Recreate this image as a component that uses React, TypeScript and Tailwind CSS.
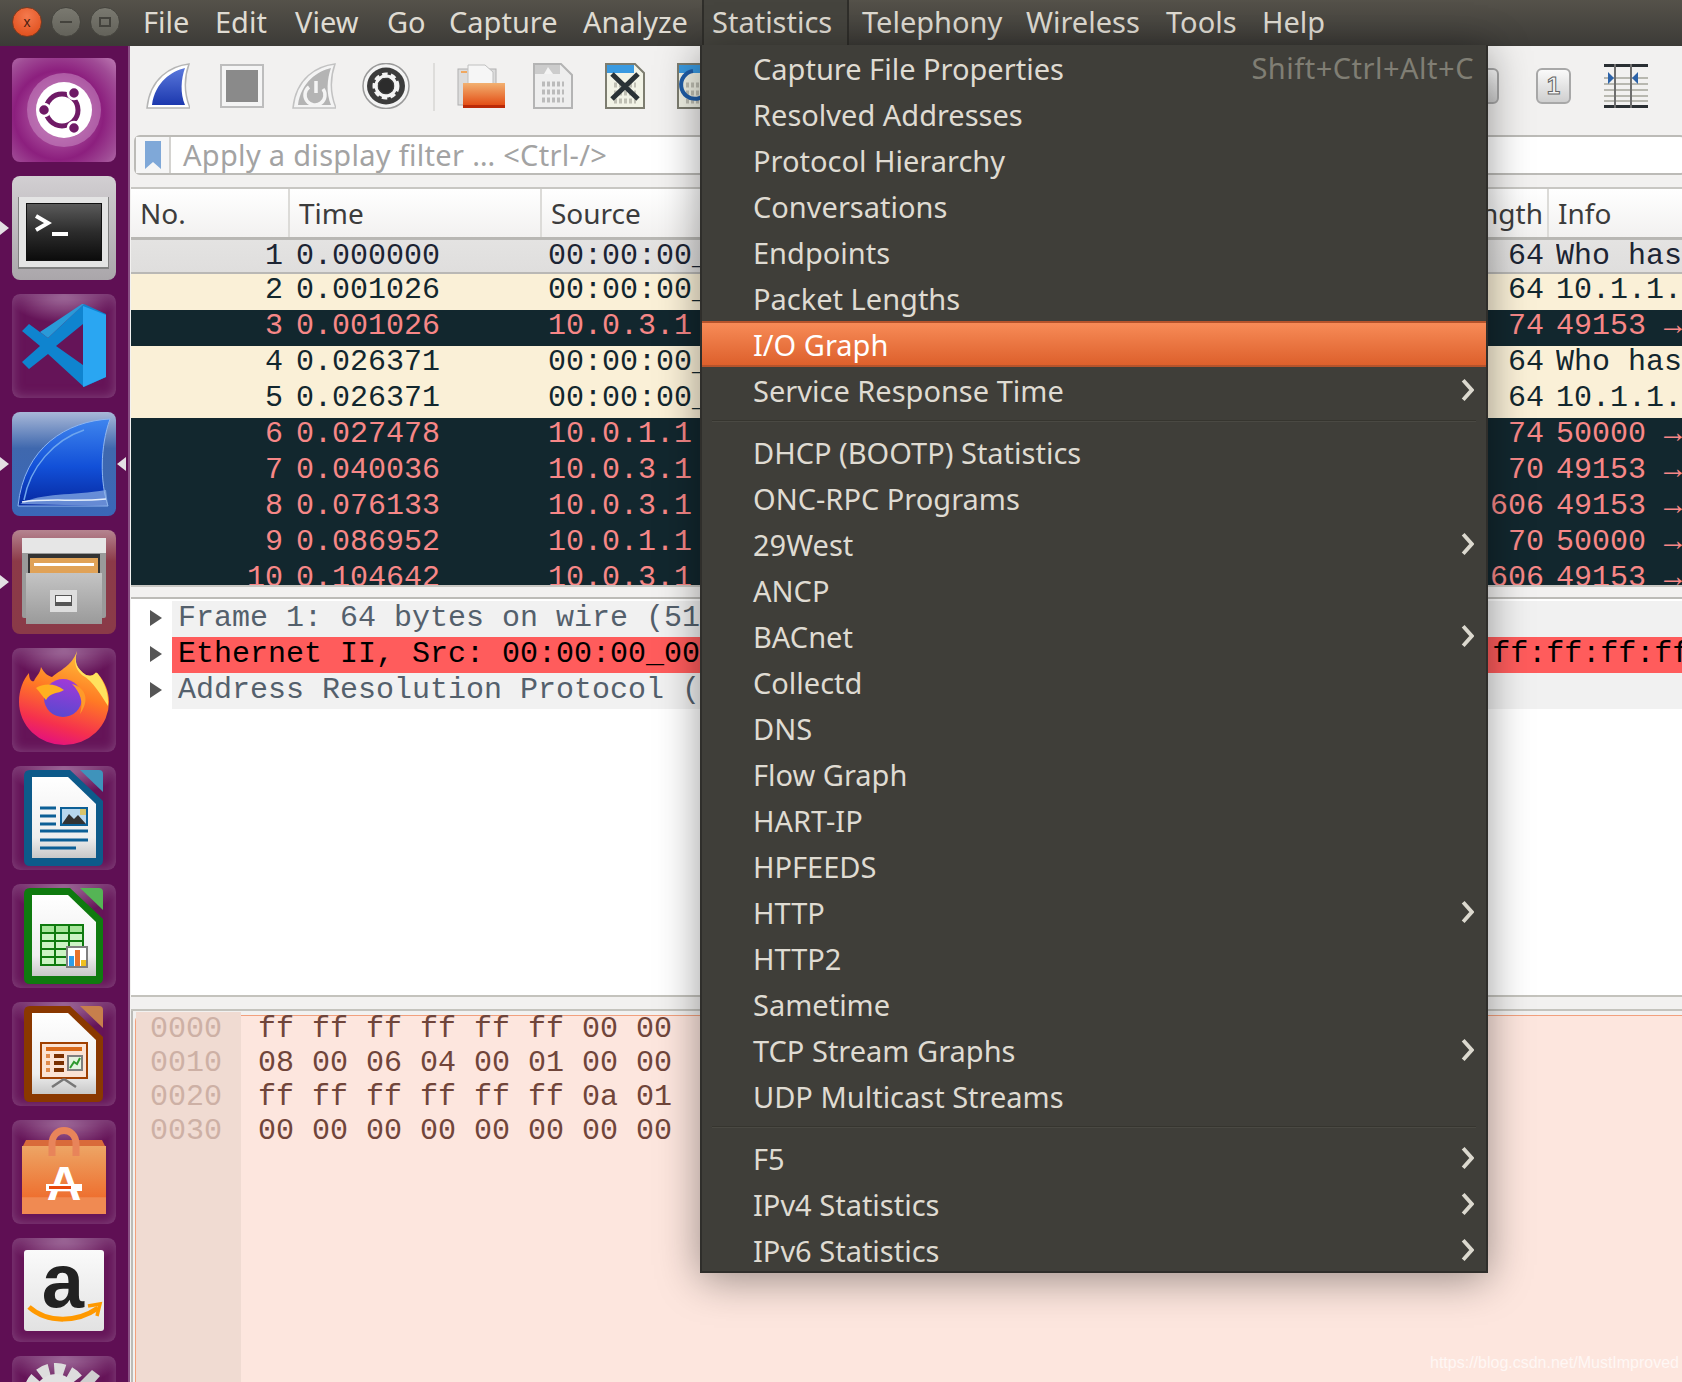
import type { ReactNode } from 'react';

const menuBar = [
  { label: 'File', w: 'w-[72px]' },
  { label: 'Edit', w: 'w-[80px]' },
  { label: 'View', w: 'w-[92px]' },
  { label: 'Go', w: 'w-[62px]' },
  { label: 'Capture', w: 'w-[134px]' },
  { label: 'Analyze', w: 'w-[119px]' },
];
const menuBarRest = [
  { label: 'Telephony', w: 'w-[164px]' },
  { label: 'Wireless', w: 'w-[140px]' },
  { label: 'Tools', w: 'w-[96px]' },
  { label: 'Help', w: 'w-[80px]' },
];

type Pkt = { no: number; time: string; src: string; len: number; info: string; kind: 'sel' | 'arp' | 'tcp' };

const packets: Pkt[] = [
  { no: 1, time: '0.000000', src: '00:00:00_00:00:00', len: 64, info: 'Who has', kind: 'sel' },
  { no: 2, time: '0.001026', src: '00:00:00_00:00:00', len: 64, info: '10.1.1.1', kind: 'arp' },
  { no: 3, time: '0.001026', src: '10.0.3.1', len: 74, info: '49153 →', kind: 'tcp' },
  { no: 4, time: '0.026371', src: '00:00:00_00:00:00', len: 64, info: 'Who has', kind: 'arp' },
  { no: 5, time: '0.026371', src: '00:00:00_00:00:00', len: 64, info: '10.1.1.1', kind: 'arp' },
  { no: 6, time: '0.027478', src: '10.0.1.1', len: 74, info: '50000 →', kind: 'tcp' },
  { no: 7, time: '0.040036', src: '10.0.3.1', len: 70, info: '49153 →', kind: 'tcp' },
  { no: 8, time: '0.076133', src: '10.0.3.1', len: 606, info: '49153 →', kind: 'tcp' },
  { no: 9, time: '0.086952', src: '10.0.1.1', len: 70, info: '50000 →', kind: 'tcp' },
  { no: 10, time: '0.104642', src: '10.0.3.1', len: 606, info: '49153 →', kind: 'tcp' },
];

const rowClass = {
  sel: 'bg-[linear-gradient(#e4e3e2,#dfdedd)] text-[#1c2433] border-y-2 border-[#b9b8b5] -mt-px',
  arp: 'bg-[#faf0d7] text-[#12272e] pb-1',
  tcp: 'bg-[#12272e] text-[#f78787] pb-1',
};

const hexRows = [
  ['0000', 'ff ff ff ff ff ff 00 00'],
  ['0010', '08 00 06 04 00 01 00 00'],
  ['0020', 'ff ff ff ff ff ff 0a 01'],
  ['0030', '00 00 00 00 00 00 00 00'],
];

type MenuEntry = { label: string; arrow?: boolean; active?: boolean; shortcut?: string };

const menuGroups: MenuEntry[][] = [
  [
    { label: 'Capture File Properties', shortcut: 'Shift+Ctrl+Alt+C' },
    { label: 'Resolved Addresses' },
    { label: 'Protocol Hierarchy' },
    { label: 'Conversations' },
    { label: 'Endpoints' },
    { label: 'Packet Lengths' },
    { label: 'I/O Graph', active: true },
    { label: 'Service Response Time', arrow: true },
  ],
  [
    { label: 'DHCP (BOOTP) Statistics' },
    { label: 'ONC-RPC Programs' },
    { label: '29West', arrow: true },
    { label: 'ANCP' },
    { label: 'BACnet', arrow: true },
    { label: 'Collectd' },
    { label: 'DNS' },
    { label: 'Flow Graph' },
    { label: 'HART-IP' },
    { label: 'HPFEEDS' },
    { label: 'HTTP', arrow: true },
    { label: 'HTTP2' },
    { label: 'Sametime' },
    { label: 'TCP Stream Graphs', arrow: true },
    { label: 'UDP Multicast Streams' },
  ],
  [
    { label: 'F5', arrow: true },
    { label: 'IPv4 Statistics', arrow: true },
    { label: 'IPv6 Statistics', arrow: true },
  ],
];

const plainTile =
  'bg-[#651458] bg-[radial-gradient(ellipse_55%_28%_at_50%_0%,#a878a4_0%,transparent_100%)] shadow-[inset_0_0_12px_#84487e]';

function DocIcon({ id, edge, corner, children }: { id: string; edge: string; corner: string; children: ReactNode }) {
  return (
    <svg viewBox="0 0 104 104" className="h-full w-full">
      <defs>
        <linearGradient id={id} x1="0" y1="0" x2="0" y2="1">
          <stop offset="0" stopColor="#ffffff" />
          <stop offset="0.75" stopColor="#eeeeee" />
          <stop offset="1" stopColor="#c8c8c8" />
        </linearGradient>
      </defs>
      <path d="M12 10 Q12 4 18 4 H58 L91 35 V94 Q91 100 85 100 H18 Q12 100 12 94 Z" fill={edge} />
      <path d="M68 4 H87 Q91 4 91 8 V26 Z" fill={corner} />
      <path d="M20 11 H56 L84 38 V92 H20 Z" fill={`url(#${id})`} />
      {children}
    </svg>
  );
}

const dockIcons: { tile: string; pipL?: boolean; pipR?: boolean; icon: ReactNode }[] = [
  {
    tile: 'bg-[radial-gradient(circle_at_45%_55%,#c478b8_0%,#8c1f7e_55%,#a04c96_80%,#bd7ab3_100%)]',
    icon: (
      <svg viewBox="0 0 104 104" className="h-full w-full">
        <circle cx="52" cy="52" r="37" fill="#c98bc2" opacity="0.55" />
        <circle cx="52" cy="52" r="28" fill="#ffffff" />
        <circle cx="50" cy="52" r="16" fill="none" stroke="#6f1a66" strokeWidth="5" />
        <g fill="#6f1a66" stroke="#ffffff" strokeWidth="2.5">
          <circle cx="62" cy="35" r="6" />
          <circle cx="32" cy="52" r="6" />
          <circle cx="62" cy="70" r="6" />
        </g>
      </svg>
    ),
  },
  {
    tile: 'bg-[linear-gradient(#d2cfd2,#aaa6aa)]',
    pipL: true,
    icon: (
      <svg viewBox="0 0 104 104" className="h-full w-full">
        <defs>
          <linearGradient id="termBg" x1="0" y1="0" x2="0" y2="1">
            <stop offset="0" stopColor="#5a5a5a" />
            <stop offset="0.5" stopColor="#2c2c2c" />
            <stop offset="1" stopColor="#0c0c0c" />
          </linearGradient>
        </defs>
        <rect x="6" y="21" width="91" height="72" fill="#808080" />
        <rect x="7" y="21" width="89" height="70" fill="#e4e4e4" />
        <rect x="14" y="27" width="76" height="58" fill="#111111" />
        <rect x="15" y="28" width="74" height="56" fill="url(#termBg)" />
        <path d="M24 40 L36 47 L24 54" fill="none" stroke="#ffffff" strokeWidth="4" />
        <rect x="40" y="56" width="16" height="4" fill="#ffffff" />
      </svg>
    ),
  },
  {
    tile: plainTile,
    icon: (
      <svg viewBox="0 0 104 104" className="h-full w-full">
        <path
          fillRule="evenodd"
          d="M72 10 L36 44 L17 30 L10 37 L28 52 L10 68 L17 75 L36 60 L72 93 L94 83 V20 Z M71 30 L44 52 L71 71 Z"
          fill="#0f84cf"
        />
        <path d="M72 10 L36 44 L28 38 L70 10 Z" fill="#2a9ad8" />
        <path d="M71 12 L94 21 V83 L71 93 Z" fill="#2aa6f2" />
      </svg>
    ),
  },
  {
    tile: 'bg-[linear-gradient(#a8b8d8_0%,#3f68ae_35%,#3a67b8_100%)]',
    pipL: true,
    pipR: true,
    icon: (
      <svg viewBox="0 0 104 104" className="h-full w-full">
        <defs>
          <linearGradient id="dockFin" x1="0" y1="0" x2="0" y2="1">
            <stop offset="0" stopColor="#3f85ee" />
            <stop offset="0.55" stopColor="#1250d8" />
            <stop offset="1" stopColor="#0628a0" />
          </linearGradient>
        </defs>
        <path d="M98 7 C55 9 12 35 6 94 H96 C88 70 88 35 98 7 Z" fill="url(#dockFin)" stroke="#8fb6f0" strokeWidth="1" />
        <path d="M12 88 C18 55 42 28 72 18" fill="none" stroke="#6ea6ee" strokeWidth="1.5" />
        <path d="M8 92 C30 80 60 84 94 78 L96 94 Z" fill="#8fb4e8" opacity="0.7" />
        <path d="M10 90 C34 86 64 90 94 87" fill="none" stroke="#e4eefb" strokeWidth="1.5" />
      </svg>
    ),
  },
  {
    tile: 'bg-[linear-gradient(#b58490,#8c3a48_30%,#8a3a48)]',
    pipL: true,
    icon: (
      <svg viewBox="0 0 104 104" className="h-full w-full">
        <defs>
          <linearGradient id="drawer" x1="0" y1="0" x2="0" y2="1">
            <stop offset="0" stopColor="#c4c4c4" />
            <stop offset="1" stopColor="#9a9a9a" />
          </linearGradient>
        </defs>
        <rect x="10" y="8" width="84" height="80" rx="2" fill="#9a9a9a" />
        <rect x="10" y="8" width="84" height="15" fill="#e6e6e6" />
        <rect x="16" y="24" width="72" height="20" fill="#333333" />
        <rect x="18" y="28" width="68" height="16" fill="#e0a257" />
        <rect x="22" y="33" width="60" height="3" fill="#ffffff" />
        <rect x="14" y="43" width="76" height="51" fill="url(#drawer)" />
        <rect x="38" y="60" width="27" height="22" fill="#dddddd" />
        <rect x="43" y="65" width="17" height="11" fill="#555555" />
        <rect x="44" y="66" width="15" height="6" fill="#f4f4f4" />
      </svg>
    ),
  },
  {
    tile: plainTile,
    icon: (
      <svg viewBox="0 0 104 104" className="h-full w-full">
        <defs>
          <linearGradient id="foxBody" x1="0.7" y1="0" x2="0.4" y2="1">
            <stop offset="0" stopColor="#ffc43a" />
            <stop offset="0.45" stopColor="#ff7a24" />
            <stop offset="0.8" stopColor="#f5304e" />
            <stop offset="1" stopColor="#e3127e" />
          </linearGradient>
          <linearGradient id="foxGlobe" x1="0.6" y1="0" x2="0.4" y2="1">
            <stop offset="0" stopColor="#a03ad8" />
            <stop offset="1" stopColor="#5a48d0" />
          </linearGradient>
        </defs>
        <path
          d="M65 3 C62 14 64 20 74 27 C84 30 82 22 86 26 C93 34 97 44 97 54 A45 43 0 0 1 7 54 C7 42 11 32 17 25 C17 32 20 34 22 33 C24 28 28 26 29 19 C32 25 36 28 40 29 C48 22 60 18 65 3 Z"
          fill="url(#foxBody)"
        />
        <path d="M65 3 C62 14 64 20 74 27 C84 30 82 22 86 26 C93 36 97 46 96 58 C88 46 82 34 70 27 C62 20 62 12 65 3 Z" fill="#ffe25e" />
        <circle cx="51" cy="50" r="19" fill="url(#foxGlobe)" />
        <path d="M24 40 C30 36 42 34 52 42 C46 46 38 44 34 52 C30 48 28 44 24 40 Z" fill="#ffb020" />
        <path d="M60 36 C74 40 78 52 68 66 C72 54 68 44 60 36 Z" fill="#ff9a2a" />
      </svg>
    ),
  },
  {
    tile: plainTile,
    icon: (
      <DocIcon id="pageW" edge="#0d5a8a" corner="#3f93bb">
        <g stroke="#0c5f96" strokeWidth="3">
          <path d="M28 42 H44 M28 50 H44 M28 58 H44 M28 65 H76 M28 74 H76 M28 82 H64" />
        </g>
        <rect x="48" y="41" width="28" height="19" fill="#0c5f96" />
        <rect x="50" y="43" width="24" height="15" fill="#b7d7ee" />
        <path d="M50 58 L57 48 L62 53 L66 49 L74 58 Z" fill="#333333" />
        <rect x="68" y="43" width="6" height="6" fill="#d8c46a" />
      </DocIcon>
    ),
  },
  {
    tile: plainTile,
    icon: (
      <DocIcon id="pageC" edge="#0f7a0f" corner="#55b455">
        <rect x="28" y="40" width="44" height="42" fill="#0f7a0f" />
        <g fill="#a6e59a">
          <rect x="30" y="42" width="12" height="6" />
          <rect x="44" y="42" width="12" height="6" />
          <rect x="58" y="42" width="12" height="6" />
        </g>
        <g fill="#ccf3c4">
          <rect x="30" y="50" width="12" height="6" />
          <rect x="44" y="50" width="12" height="6" />
          <rect x="58" y="50" width="12" height="6" />
          <rect x="30" y="58" width="12" height="6" />
          <rect x="44" y="58" width="12" height="6" />
          <rect x="58" y="58" width="12" height="6" />
          <rect x="30" y="66" width="12" height="6" />
          <rect x="44" y="66" width="12" height="6" />
          <rect x="30" y="74" width="12" height="6" />
          <rect x="44" y="74" width="12" height="6" />
        </g>
        <rect x="54" y="62" width="22" height="22" fill="#7f7f7f" />
        <rect x="56" y="64" width="18" height="18" fill="#ffffff" />
        <rect x="57" y="72" width="5" height="10" fill="#2f9ee8" />
        <rect x="63" y="66" width="5" height="16" fill="#e8742c" />
        <rect x="69" y="76" width="5" height="6" fill="#f0c020" />
      </DocIcon>
    ),
  },
  {
    tile: plainTile,
    icon: (
      <DocIcon id="pageI" edge="#8a3800" corner="#c77f4c">
        <rect x="28" y="40" width="48" height="37" fill="#a04000" />
        <rect x="30" y="42" width="44" height="33" fill="#fbe3d3" />
        <rect x="34" y="45" width="36" height="4" fill="#d96a1a" />
        <path d="M34 54 H38 M34 61 H38 M34 68 H38" stroke="#e08a4a" strokeWidth="4" />
        <path d="M42 54 H52 M42 61 H52 M42 68 H52" stroke="#7a3000" strokeWidth="4" />
        <rect x="55" y="53" width="16" height="16" fill="#7f7f7f" />
        <rect x="57" y="55" width="12" height="12" fill="#e4f3e0" />
        <path d="M58 66 L62 60 L65 62 L68 56" fill="none" stroke="#2f9a2f" strokeWidth="2" />
        <path d="M52 77 L40 85 M52 77 L64 85" stroke="#777777" strokeWidth="2.5" />
      </DocIcon>
    ),
  },
  {
    tile: plainTile,
    icon: (
      <svg viewBox="0 0 104 104" className="h-full w-full">
        <defs>
          <linearGradient id="bag" x1="0" y1="0" x2="0" y2="1">
            <stop offset="0" stopColor="#eda565" />
            <stop offset="0.75" stopColor="#ee7030" />
            <stop offset="0.76" stopColor="#f08a52" />
            <stop offset="1" stopColor="#f08a52" />
          </linearGradient>
        </defs>
        <path d="M14 20 H90 L94 28 H10 Z" fill="#d96a3a" />
        <rect x="10" y="26" width="84" height="68" fill="url(#bag)" />
        <path d="M40 36 V24 C40 6 64 6 64 24 V36" fill="none" stroke="#e8845a" strokeWidth="7" />
        <text x="52" y="80" textAnchor="middle" fontFamily="'Liberation Sans', sans-serif" fontWeight="700" fontSize="48" fill="#ffffff">
          A
        </text>
        <rect x="34" y="64" width="36" height="7" fill="#ffffff" />
        <rect x="37" y="66" width="22" height="3" fill="#e8480c" />
      </svg>
    ),
  },
  {
    tile: plainTile,
    icon: (
      <svg viewBox="0 0 104 104" className="h-full w-full">
        <defs>
          <linearGradient id="amz" x1="0" y1="0" x2="0" y2="1">
            <stop offset="0" stopColor="#fafafa" />
            <stop offset="1" stopColor="#e2e2e2" />
          </linearGradient>
        </defs>
        <rect x="12" y="12" width="80" height="81" rx="3" fill="url(#amz)" />
        <text x="51" y="69" textAnchor="middle" fontFamily="'Liberation Sans', sans-serif" fontWeight="700" fontSize="76" fill="#222222">
          a
        </text>
        <path d="M17 69 C36 86 66 84 86 70" fill="none" stroke="#ff9900" strokeWidth="5" />
        <path d="M76 68 L88 66 L85 78" fill="none" stroke="#ff9900" strokeWidth="3.5" />
      </svg>
    ),
  },
  {
    tile: plainTile,
    icon: (
      <svg viewBox="0 0 104 104" className="h-full w-full">
        <circle cx="44" cy="40" r="26" fill="none" stroke="#dddddd" strokeWidth="14" strokeDasharray="10 5" />
        <circle cx="44" cy="40" r="22" fill="#e2e2e2" />
        <path d="M66 28 L80 14 L88 20 L74 36 Z" fill="#cfcfcf" />
      </svg>
    ),
  },
];

function Pip({ side }: { side: 'l' | 'r' }) {
  return side === 'l' ? (
    <span className="absolute left-[-12px] top-[45px] h-0 w-0 border-y-[7px] border-l-[9px] border-y-transparent border-l-[#e4e0e4]" />
  ) : (
    <span className="absolute right-[-10px] top-[45px] h-0 w-0 border-y-[7px] border-r-[9px] border-y-transparent border-r-[#e4e0e4]" />
  );
}

function Dock() {
  return (
    <div className="flex h-[1336px] w-[130px] shrink-0 flex-col gap-[14px] overflow-hidden border-r-2 border-[#8a4f84] bg-[#5f0f54] pl-3 pt-3">
      {dockIcons.map((d, i) => (
        <div key={i} className={`relative h-[104px] w-[104px] shrink-0 rounded-lg ${d.tile}`}>
          {d.pipL && <Pip side="l" />}
          {d.pipR && <Pip side="r" />}
          {d.icon}
        </div>
      ))}
    </div>
  );
}

function Toolbar() {
  return (
    <div className="flex h-[89px] shrink-0 items-start justify-between bg-[#f2f1f0] pl-[15px] pr-[34px] pt-[17px]">
      <div className="flex items-start">
        <svg viewBox="0 0 44 46" className="h-[46px] w-[44px]">
          <defs>
            <linearGradient id="finBlue" x1="0" y1="0" x2="0" y2="1">
              <stop offset="0" stopColor="#5a78dc" />
              <stop offset="1" stopColor="#1c38ae" />
            </linearGradient>
          </defs>
          <path d="M43 1 C25 3 4 15 1 45 H44 C38 30 38 15 43 1 Z" fill="#ffffff" stroke="#b5b5b5" strokeWidth="1.5" />
          <path d="M39 5 C26 8 9 19 6 42 H39 C34 30 35 16 39 5 Z" fill="url(#finBlue)" />
        </svg>
        <svg viewBox="0 0 44 44" className="ml-[30px] mt-px h-11 w-11">
          <rect x="1" y="1" width="42" height="42" fill="#f4f4f4" stroke="#bdbdbd" strokeWidth="2" />
          <rect x="6" y="6" width="32" height="32" fill="#8a8a8a" />
        </svg>
        <svg viewBox="0 0 44 46" className="ml-[28px] h-[46px] w-[44px]">
          <path d="M43 1 C25 3 4 15 1 45 H44 C38 30 38 15 43 1 Z" fill="#f4f4f4" stroke="#c2c2c2" strokeWidth="1.5" />
          <path d="M39 5 C26 8 9 19 6 42 H39 C34 30 35 16 39 5 Z" fill="#b4b4b4" />
          <path d="M17 24 A10 10 0 1 0 31 26" fill="none" stroke="#f4f4f4" strokeWidth="3.5" />
          <path d="M24 18 V30" stroke="#f4f4f4" strokeWidth="3.5" />
        </svg>
        <svg viewBox="0 0 48 46" className="ml-[26px] h-[46px] w-12">
          <ellipse cx="24" cy="23" rx="23" ry="22.5" fill="#f4f4f4" stroke="#9a9a9a" strokeWidth="1.5" />
          <ellipse cx="24" cy="23" rx="19" ry="18.5" fill="#3c3c3c" />
          <circle cx="24" cy="23" r="11" fill="none" stroke="#f4f4f4" strokeWidth="5" strokeDasharray="5 3" />
          <circle cx="24" cy="23" r="10" fill="none" stroke="#f4f4f4" strokeWidth="3" />
          <circle cx="24" cy="23" r="7" fill="#2c2c2c" />
        </svg>
        <div className="ml-[23px] h-12 w-0.5 bg-[#dedddb]" />
        <svg viewBox="0 0 48 44" className="ml-[22px] mt-px h-11 w-12">
          <defs>
            <linearGradient id="folderFront" x1="0" y1="0" x2="0" y2="1">
              <stop offset="0" stopColor="#f2b070" />
              <stop offset="1" stopColor="#e2460e" />
            </linearGradient>
          </defs>
          <rect x="1" y="5" width="38" height="36" fill="#dcdcdc" stroke="#b0b0b0" />
          <rect x="4" y="7" width="6" height="2" fill="#f0a860" />
          <path d="M11 1 H28 L36 8 V26 H11 Z" fill="#f6f6f6" stroke="#c0c0c0" />
          <rect x="6" y="19" width="42" height="24" fill="url(#folderFront)" />
          <rect x="6" y="41" width="42" height="3" fill="#bb2a08" />
        </svg>
        <svg viewBox="0 0 40 46" className="ml-[28px] h-[46px] w-10">
          <path d="M1 1 H28 L39 12 V45 H1 Z" fill="#eeeeee" stroke="#b4b4b4" strokeWidth="2" />
          <path d="M2 2 H27 V11 H2 Z" fill="#cccccc" />
          <path d="M11 11 L15 4 L20 11 Z" fill="#f4f4f4" />
          <path d="M9 21 H31 M9 29 H31 M9 37 H31" stroke="#bbbbbb" strokeWidth="5" strokeDasharray="3 2" />
        </svg>
        <svg viewBox="0 0 40 46" className="ml-8 h-[46px] w-10">
          <path d="M1 1 H30 L39 10 V45 H1 Z" fill="#f2f3e6" stroke="#7d7d70" strokeWidth="2" />
          <path d="M2 2 H29 V10 H2 Z" fill="#3a9ae0" />
          <path d="M9 22 H31 M9 30 H31 M9 38 H31" stroke="#c0c0b4" strokeWidth="5" strokeDasharray="3 2" />
          <path d="M7 11 L33 36 M33 11 L7 36" stroke="#2a3236" strokeWidth="5" />
        </svg>
        <svg viewBox="0 0 40 46" className="ml-8 h-[46px] w-10">
          <path d="M1 1 H30 L39 10 V45 H1 Z" fill="#f2f3e6" stroke="#7d7d70" strokeWidth="2" />
          <path d="M2 2 H29 V10 H2 Z" fill="#3a9ae0" />
          <path d="M9 22 H31 M9 30 H31 M9 38 H31" stroke="#c0c0b4" strokeWidth="5" strokeDasharray="3 2" />
          <path d="M16 8 A14 14 0 1 0 32 20" fill="none" stroke="#1f5da8" strokeWidth="4" />
        </svg>
      </div>
      <div className="flex items-start">
        <div className="mt-[5px] flex h-9 w-9 items-center justify-center rounded-md border-2 border-[#a8a8a8] bg-[linear-gradient(#fafafa,#cfcfcf)] text-[18px] font-bold text-[#777777]">
          <span className="font-['Liberation_Sans',sans-serif]">0</span>
        </div>
        <div className="ml-[37px] mt-[5px] flex h-9 w-[35px] items-center justify-center rounded-md border-2 border-[#a8a8a8] bg-[linear-gradient(#fafafa,#cfcfcf)] font-['Liberation_Sans',sans-serif] text-[24px] font-bold text-[#f6f6f6] [-webkit-text-stroke:1px_#666666]">
          1
        </div>
        <svg viewBox="0 0 44 44" className="ml-[33px] mt-px h-11 w-11">
          <path d="M0 14 H44 M0 20 H44 M0 26 H44 M0 32 H44 M0 37 H44" stroke="#b8b8b0" strokeWidth="2" />
          <path d="M0 1.5 H44 M0 42.5 H44" stroke="#2a2f33" strokeWidth="3" />
          <path d="M11 0 V44 M27 0 V44" stroke="#6e6e6e" strokeWidth="2" />
          <path d="M4 8 L10 14 L4 20 Z M34 8 L28 14 L34 20 Z" fill="#2b62a8" />
        </svg>
      </div>
    </div>
  );
}

function FilterBar() {
  return (
    <div className="-mr-1 ml-[3px] flex h-10 shrink-0 items-center rounded-md border-2 border-[#bcbbb7] bg-white">
      <div className="flex h-full w-[35px] shrink-0 items-center justify-center border-r-2 border-[#d4d3d0] bg-[#f6f6f6]">
        <svg viewBox="0 0 16 28" className="h-7 w-4">
          <path d="M0 0 H16 V28 L8 21 L0 28 Z" fill="#7fa8d8" />
        </svg>
      </div>
      <span className="pl-[12px] text-[29px] tracking-[0.3px] text-[#a3a3a3]">Apply a display filter … &lt;Ctrl-/&gt;</span>
    </div>
  );
}

function PacketTable() {
  return (
    <div className="mt-3 shrink-0 border-t-2 border-[#c8c7c3]">
      <div className="flex h-[48px] bg-[linear-gradient(#ffffff,#f2f1f0)] text-[28px] text-[#3c3c3c] shadow-[0_2px_0_#b8b7b3]">
        <div className="flex w-[159px] items-center border-r-2 border-[#dcdbd8] pl-[9px]">No.</div>
        <div className="flex w-[252px] items-center border-r-2 border-[#dcdbd8] pl-[9px]">Time</div>
        <div className="flex flex-1 items-center pl-[9px]">Source</div>
        <div className="flex w-[150px] items-center justify-end border-r-2 border-[#dcdbd8] pr-[4px]">Length</div>
        <div className="flex w-[133px] items-center pl-[9px]">Info</div>
      </div>
      <div className="mt-[2px] h-[346px] overflow-hidden">
        {packets.map((p) => (
          <div
            key={p.no}
            className={`flex h-9 items-center whitespace-pre font-['Liberation_Mono',monospace] text-[30px] leading-9 ${rowClass[p.kind]}`}
          >
            <div className="w-[165px] shrink-0 pr-[13px] text-right">{p.no}</div>
            <div className="w-[252px] shrink-0">{p.time}</div>
            <div className="flex-1 overflow-hidden">{p.src}</div>
            <div className="w-[156px] shrink-0 pr-[12px] text-right">{p.len}</div>
            <div className="w-[126px] shrink-0 overflow-hidden">{p.info}</div>
          </div>
        ))}
      </div>
    </div>
  );
}

function DetailRow({ text, red }: { text: string; red?: boolean }) {
  return (
    <div className="flex h-9 items-center">
      <div className="flex w-[41px] shrink-0 items-center pb-[3px] pl-[19px]">
        <span className="h-0 w-0 border-y-[8px] border-l-[12px] border-y-transparent border-l-[#555555]" />
      </div>
      <div
        className={`flex h-9 flex-1 items-center overflow-hidden whitespace-pre pb-[3px] pl-[6px] font-['Liberation_Mono',monospace] text-[30px] leading-none ${
          red ? 'bg-[#ff5c5c] text-black' : 'bg-[#f1f1f1] text-[#54606c]'
        }`}
      >
        {text}
      </div>
    </div>
  );
}

function Details() {
  return (
    <>
      <div className="h-[14px] shrink-0 border-b-2 border-t-2 border-b-[#bcbbb7] border-t-[#c8c7c3] bg-[#f2f1f0]" />
      <div className="h-[398px] shrink-0 border-b-2 border-[#c4c3bd] bg-white pt-[2px]">
        <DetailRow text="Frame 1: 64 bytes on wire (512 bits), 64 bytes captured (512 bits)" />
        <DetailRow red text="Ethernet II, Src: 00:00:00_00:00:00 (00:00:00:00:00:00), Dst: Broadcast (ff:ff:ff:ff:ff:ff)" />
        <DetailRow text="Address Resolution Protocol (request)" />
      </div>
    </>
  );
}

function HexPane() {
  return (
    <div className="flex-1 overflow-hidden">
      <div className="h-[14px] border-b-2 border-[#c4c3bd] bg-[#f2f1f0]" />
      <div className="flex h-[372px] border-l-2 border-[#bcbbb7] pl-[2px] pt-1">
        <div className="flex flex-1 rounded-tl-md border-l border-t border-[#f2a07d] bg-[#fde6de] font-['Liberation_Mono',monospace] text-[30px]">
          <div className="-mt-[4px] w-[105px] shrink-0 bg-[#f0dbd2] pl-[14px] leading-[34px] text-[#cdb0a5]">
            {hexRows.map((r) => (
              <div key={r[0]}>{r[0]}</div>
            ))}
          </div>
          <div className="-mt-[4px] flex-1 whitespace-pre pl-[17px] leading-[34px] text-[#70453a]">
            {hexRows.map((r) => (
              <div key={r[0]}>{r[1]}</div>
            ))}
          </div>
        </div>
      </div>
    </div>
  );
}

function Chevron() {
  return (
    <svg viewBox="0 0 12 20" className="h-[22px] w-[13px]">
      <path d="M2 1 L10 10 L2 19" fill="none" stroke="#dcd9cf" strokeWidth="3.5" />
    </svg>
  );
}

function StatsMenu() {
  return (
    <div className="absolute left-[700px] top-[45px] h-[1228px] w-[788px] overflow-hidden border-2 border-t-0 border-[#2f2e2b] bg-[#3f3e39] text-[29px] text-[#dfdbd2] shadow-[0_6px_40px_rgba(0,0,0,0.4)]">
      {menuGroups.map((group, gi) => (
        <div key={gi}>
          {gi > 0 && (
            <div className="flex h-4 items-center pl-[10px] pr-[10px]">
              <div className="h-0.5 w-full border-t border-b border-t-[#36352f] border-b-[#4a4943]" />
            </div>
          )}
          {group.map((item) => (
            <div
              key={item.label}
              className={`flex h-[46px] items-center justify-between pl-[51px] pr-[12px] ${
                item.active ? 'border-y-2 border-[#b5532b] bg-[linear-gradient(#f78b57,#dd602c)] text-[#ffffff]' : ''
              }`}
            >
              <span className="leading-none">{item.label}</span>
              {item.shortcut && <span className="tracking-[0.5px] text-[#807e74]">{item.shortcut}</span>}
              {item.arrow && <Chevron />}
            </div>
          ))}
        </div>
      ))}
    </div>
  );
}

function TitleBar() {
  return (
    <div className="flex h-[46px] shrink-0 items-center bg-[linear-gradient(#55524a,#3c3b37)] text-[29px] text-[#dfdbd2]">
      <div className="flex w-[143px] shrink-0 items-center gap-[9px] pb-0.5 pl-3">
        <div className="flex h-[30px] w-[30px] items-center justify-center rounded-full border border-[#7a3a20] bg-[radial-gradient(circle_at_50%_30%,#f47a4e,#dd4814)] font-['Liberation_Sans',sans-serif] text-[14px] leading-none text-[#4a2010]">
          x
        </div>
        <div className="flex h-[30px] w-[30px] items-center justify-center rounded-full border border-[#45443e] bg-[linear-gradient(#7a7970,#63625a)]">
          <span className="h-0.5 w-3 bg-[#44433d]" />
        </div>
        <div className="flex h-[30px] w-[30px] items-center justify-center rounded-full border border-[#45443e] bg-[linear-gradient(#7a7970,#63625a)]">
          <span className="h-[10px] w-3 border-2 border-[#44433d]" />
        </div>
      </div>
      {menuBar.map((m) => (
        <div key={m.label} className={`${m.w} shrink-0 pb-1 leading-none`}>
          {m.label}
        </div>
      ))}
      <div className="flex h-full w-[147px] shrink-0 items-center border-x-2 border-[#2f2e2a] bg-[#45443e] pb-1 pl-2 leading-none">Statistics</div>
      <div className="w-[13px] shrink-0" />
      {menuBarRest.map((m) => (
        <div key={m.label} className={`${m.w} shrink-0 pb-1 leading-none`}>
          {m.label}
        </div>
      ))}
    </div>
  );
}

export default function App() {
  return (
    <div className="relative flex h-[1382px] w-[1682px] flex-col overflow-hidden bg-[#f2f1f0] font-['Noto_Sans',sans-serif]">
      <TitleBar />
      <div className="flex flex-1 overflow-hidden">
        <Dock />
        <div className="flex min-w-0 flex-1 flex-col pl-px">
          <Toolbar />
          <FilterBar />
          <PacketTable />
          <Details />
          <HexPane />
        </div>
      </div>
      <StatsMenu />
      <span className="absolute left-[1430px] top-[1351px] font-['Liberation_Sans',sans-serif] text-[16px] text-white/70">
        https://blog.csdn.net/MustImproved
      </span>
    </div>
  );
}
